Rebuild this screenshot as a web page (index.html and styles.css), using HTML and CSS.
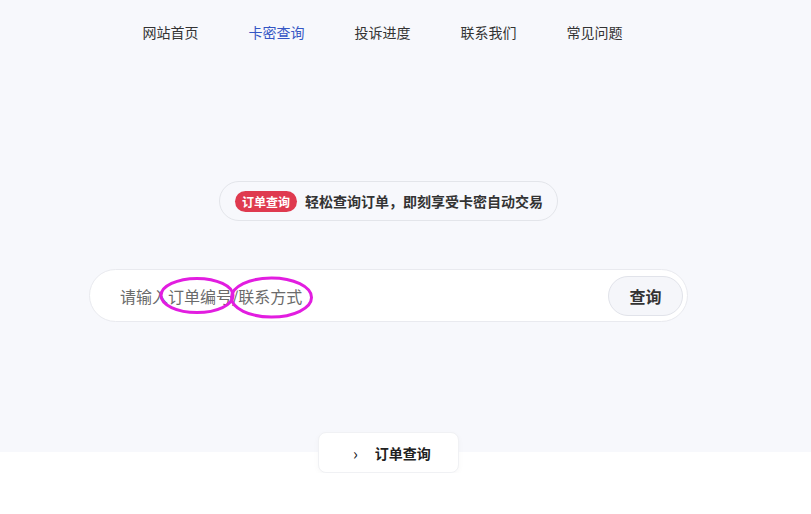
FILE: index.html
```html
<!DOCTYPE html>
<html lang="zh-CN">
<head>
    <meta charset="UTF-8">
    <meta name="viewport" content="width=device-width, initial-scale=1.0">
    <title>卡密查询</title>
    <link rel="stylesheet" href="styles.css">
</head>
<body>
    <div class="hero">
        <div class="page">
            <nav class="nav">
                <a href="#">网站首页</a>
                <a href="#" class="active">卡密查询</a>
                <a href="#">投诉进度</a>
                <a href="#">联系我们</a>
                <a href="#">常见问题</a>
            </nav>

            <div class="tip-row">
                <div class="tip">
                    <span class="tag">订单查询</span>
                    <span class="tip-text">轻松查询订单，即刻享受卡密自动交易</span>
                </div>
            </div>

            <form class="search" onsubmit="return false">
                <input type="text" id="kw" placeholder="请输入订单编号/联系方式">
                <button type="submit">查询</button>
                <svg class="mark" width="200" height="52" viewBox="0 0 200 52">
                    <ellipse cx="47" cy="25.5" rx="36" ry="17" fill="none" stroke="#e21de0" stroke-width="3"/>
                    <ellipse cx="121.5" cy="27.5" rx="40" ry="19.5" fill="none" stroke="#e21de0" stroke-width="3"/>
                </svg>
            </form>
        </div>
    </div>

    <div class="page">
        <div class="card-row">
            <div class="card">
                <span class="chev">›</span>
                <span>订单查询</span>
            </div>
        </div>
    </div>
</body>
</html>
```

FILE: styles.css
```css
* {
    box-sizing: border-box;
}

body {
    margin: 0;
    font-family: "Noto Sans CJK SC", "Liberation Sans", sans-serif;
    color: #333;
    background: #fff;
}

.hero {
    background: #f7f8fc;
    height: 452px;
}

.page {
    width: 777px;
}

.nav {
    display: flex;
    justify-content: center;
    gap: 50px;
    padding: 22px 12px 0 0;
    height: 66px;
}

.nav a {
    font-size: 14px;
    line-height: 20px;
    color: #333;
    text-decoration: none;
}

.nav a.active {
    color: #3556c4;
}

.tip-row {
    display: flex;
    justify-content: center;
    margin-top: 115px;
}

.tip {
    display: flex;
    align-items: center;
    gap: 8px;
    height: 40px;
    padding: 0 14px 0 15px;
    border: 1px solid #e3e5ea;
    border-radius: 20px;
    background: #f7f8fc;
}

.tag {
    background: #df3a4f;
    color: #fff;
    font-size: 12px;
    font-weight: bold;
    line-height: 21px;
    padding: 0 7px;
    border-radius: 11px;
}

.tip-text {
    font-size: 14px;
    font-weight: bold;
    color: #333;
}

.search {
    position: relative;
    display: flex;
    align-items: center;
    width: 599px;
    height: 53px;
    margin: 48px auto 0;
    padding: 0 4px 0 30px;
    background: #fff;
    border: 1px solid #e9eaef;
    border-radius: 27px;
}

.search input {
    flex: 1;
    padding: 0;
    border: none;
    outline: none;
    font-family: inherit;
    font-size: 16px;
    background: transparent;
}

.search input::placeholder {
    color: #6b6b6b;
}

.mark {
    position: absolute;
    left: 60px;
    top: 0;
    pointer-events: none;
}

.search button {
    width: 75px;
    height: 40px;
    border: 1px solid #e1e3ea;
    border-radius: 20px;
    background: #f5f6fa;
    font-family: inherit;
    font-size: 16px;
    font-weight: bold;
    color: #333;
}

.card-row {
    display: flex;
    justify-content: center;
    margin-top: -20px;
}

.card {
    display: flex;
    align-items: center;
    gap: 17px;
    width: 141px;
    height: 41px;
    padding-left: 34px;
    background: #fff;
    border: 1px solid #f0f1f4;
    border-radius: 8px;
    box-shadow: 0 2px 6px rgba(0, 0, 0, 0.03);
    font-size: 14px;
    font-weight: bold;
    color: #222;
}

.chev {
    font-size: 16px;
    font-weight: normal;
}
```
